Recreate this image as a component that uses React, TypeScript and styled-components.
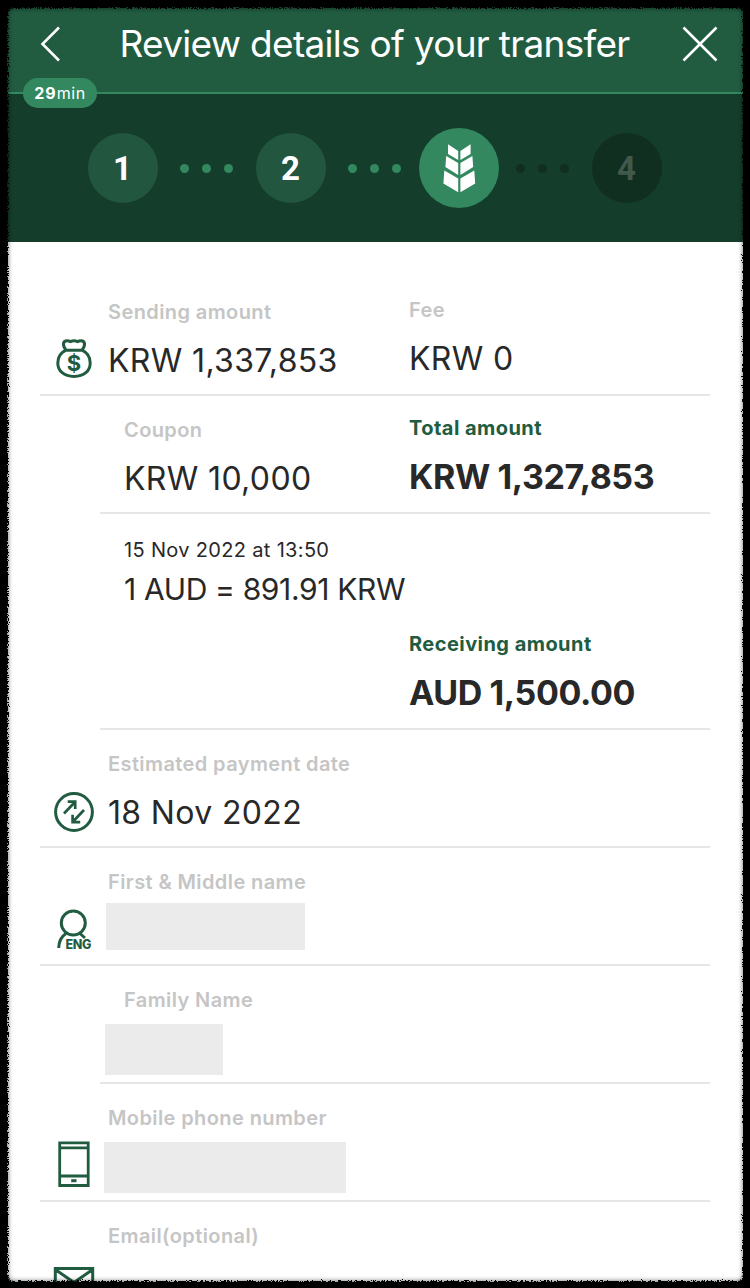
import React from "react";
import styled, { createGlobalStyle } from "styled-components";

const GlobalStyle = createGlobalStyle`
  * { box-sizing: border-box; }
  body { margin: 0; background: #000; font-family: Inter, "Liberation Sans", sans-serif; }
`;

const Screen = styled.div`
  position: relative;
  width: 750px;
  height: 1288px;
  padding: 7px 7px 6px 7px;
  overflow: hidden;
  background: #000;
`;

const Page = styled.main`
  height: 100%;
  overflow: hidden;
  background: #fff;
`;

const Header = styled.header`
  position: relative;
  display: flex;
  align-items: center;
  justify-content: space-between;
  height: 87px;
  padding: 2px 23px 13px 28px;
  background: #215c41;
  border-bottom: 2px solid #338860;
`;

const IconButton = styled.button`
  display: flex;
  padding: 0;
  border: 0;
  background: none;
`;

const Title = styled.h1`
  margin: 0 0 0 2px;
  color: #fff;
  font-size: 37px;
  font-weight: 400;
  line-height: 44px;
  letter-spacing: -0.7px;
  white-space: nowrap;
`;

const Timer = styled.span`
  position: absolute;
  left: 16px;
  top: 71px;
  width: 74px;
  height: 30px;
  border-radius: 15px;
  background: #338860;
  color: #fff;
  font-size: 16px;
  line-height: 30px;
  letter-spacing: 0.6px;
  text-align: center;
  white-space: nowrap;
  b { font-weight: 700; letter-spacing: 1px; }
`;

const Stepper = styled.nav`
  display: flex;
  align-items: center;
  justify-content: center;
  height: 148px;
  padding-right: 1px;
  background: #153d2b;
`;

const StepSlot = styled.div`
  display: flex;
  justify-content: center;
  width: 80px;
`;

type StepState = "done" | "current" | "next";
const stepFill = { done: "#22563f", current: "#338860", next: "#112f21" };

const StepCircle = styled.div<{ $state: StepState }>`
  display: flex;
  align-items: center;
  justify-content: center;
  width: ${(p) => (p.$state === "current" ? 80 : 70)}px;
  height: ${(p) => (p.$state === "current" ? 80 : 70)}px;
  border-radius: 50%;
  background: ${(p) => stepFill[p.$state]};
  color: ${(p) => (p.$state === "next" ? "#41594d" : "#fff")};
  font-family: Roboto, sans-serif;
  font-size: 33px;
  font-weight: 700;
`;

const Dots = styled.div`
  display: flex;
  justify-content: center;
  gap: 13px;
  width: 88px;
`;

const Dot = styled.i<{ $dim?: boolean }>`
  width: 9px;
  height: 9px;
  border-radius: 50%;
  background: ${(p) => (p.$dim ? "#112f21" : "#338860")};
`;

const Details = styled.section`
  padding: 36px 33px 0;
`;

const Row = styled.div<{ $indent?: boolean; $height?: number }>`
  display: flex;
  height: ${(p) => p.$height ?? 118}px;
  margin-left: ${(p) => (p.$indent ? 60 : 0)}px;
  padding-left: ${(p) => (p.$indent ? 24 : 0)}px;
  border-bottom: 2px solid #e6e6e6;
`;

const IconCell = styled.div`
  display: flex;
  flex: none;
  justify-content: center;
  width: 68px;
  padding-top: 58px;
  svg { display: block; overflow: visible; }
`;

const Field = styled.div<{ $width?: number; $raised?: boolean; $top?: number }>`
  display: flex;
  flex-direction: column;
  align-items: flex-start;
  gap: 17px;
  width: ${(p) => (p.$width ? `${p.$width}px` : "auto")};
  padding-top: ${(p) => p.$top ?? (p.$raised ? 20 : 22)}px;
  white-space: nowrap;
`;

const Label = styled.span<{ $strong?: boolean }>`
  color: ${(p) => (p.$strong ? "#215c41" : "#c5c5c5")};
  font-size: 20px;
  font-weight: ${(p) => (p.$strong ? 700 : 600)};
  line-height: 24px;
  letter-spacing: ${(p) => (p.$strong ? 0.45 : 0.4)}px;
`;

const Value = styled.span<{ $strong?: boolean }>`
  color: #282828;
  font-size: ${(p) => (p.$strong ? 34 : 32)}px;
  font-weight: ${(p) => (p.$strong ? 700 : 400)};
  line-height: 40px;
  letter-spacing: ${(p) => (p.$strong ? -0.4 : 0.35)}px;
`;

const Rate = styled(Field)`
  gap: 7px;
  width: 285px;
  padding-top: 24px;
`;

const RateTime = styled.span`
  color: #282828;
  font-size: 20px;
  line-height: 24px;
  letter-spacing: 0.33px;
`;

const RateValue = styled.span`
  color: #282828;
  font-size: 30px;
  line-height: 40px;
  letter-spacing: -0.35px;
`;

const Masked = styled.div<{ $w: number; $h: number; $shift: number; $up: number }>`
  width: ${(p) => p.$w}px;
  height: ${(p) => p.$h}px;
  margin: ${(p) => -p.$up}px 0 0 ${(p) => -p.$shift}px;
  background: #ebebeb;
`;

const Edge = styled.svg`
  position: absolute;
  inset: 0;
  pointer-events: none;
`;

const Icon = ({ children }: { children: React.ReactNode }) => (
  <svg width="48" height="48" viewBox="0 0 48 48" fill="none" stroke="#215c41" strokeWidth="3">
    {children}
  </svg>
);

const leaves =
  "M29 16.3 39.2 23V32L29 26ZM27.2 28 39.2 35V47L26.4 39ZM25.3 42.5 39.2 50.5V64.3L24.4 55.5Z";

const Wheat = () => (
  <svg width="80" height="80" viewBox="0 0 80 80" fill="#fff">
    <path d={leaves} />
    <path transform="translate(80.6 0) scale(-1 1)" d={leaves} />
  </svg>
);

const DotGroup = ({ dim }: { dim?: boolean }) => (
  <Dots>
    <Dot $dim={dim} />
    <Dot $dim={dim} />
    <Dot $dim={dim} />
  </Dots>
);

const ring = "M-20-20H770V1308H-20ZM14 8Q8 8 8 14V1275Q8 1281 14 1281H737Q743 1281 743 1275V14Q743 8 737 8Z";

export default function App() {
  return (
    <>
      <GlobalStyle />
      <Screen>
        <Page>
          <Header>
            <IconButton aria-label="Back">
              <svg width="32" height="40" viewBox="0 0 32 40" fill="none" stroke="#fff" strokeWidth="2.6">
                <path d="M24 3.5 7.5 20 24 36.5" />
              </svg>
            </IconButton>
            <Title>Review details of your transfer</Title>
            <IconButton aria-label="Close">
              <svg width="40" height="40" viewBox="0 0 40 40" fill="none" stroke="#fff" strokeWidth="2.6">
                <path d="M3.5 3.5 36.5 36.5M36.5 3.5 3.5 36.5" />
              </svg>
            </IconButton>
            <Timer><b>29</b>min</Timer>
          </Header>
          <Stepper>
            <StepSlot><StepCircle $state="done">1</StepCircle></StepSlot>
            <DotGroup />
            <StepSlot><StepCircle $state="done">2</StepCircle></StepSlot>
            <DotGroup />
            <StepSlot><StepCircle $state="current"><Wheat /></StepCircle></StepSlot>
            <DotGroup dim />
            <StepSlot><StepCircle $state="next">4</StepCircle></StepSlot>
          </Stepper>
          <Details>
            <Row>
              <IconCell>
                <Icon>
                  <path d="M16 14.2C10 17 7.8 22 7.8 27C7.8 35 14 40.4 24 40.4S40.2 35 40.2 27C40.2 22 38 17 32 14.2ZM16 14.2C12 9 13 4.7 17 4.7Q19 4.7 20.5 5.6Q24 4 27.5 5.6Q29 4.7 31 4.7C35 4.7 36 9 32 14.2" />
                  <text x="24" y="35" textAnchor="middle" fill="#215c41" stroke="none" fontSize="22" fontWeight="700">$</text>
                </Icon>
              </IconCell>
              <Field $width={301}><Label>Sending amount</Label><Value>KRW 1,337,853</Value></Field>
              <Field $raised><Label>Fee</Label><Value>KRW 0</Value></Field>
            </Row>
            <Row $indent>
              <Field $width={285}><Label>Coupon</Label><Value>KRW 10,000</Value></Field>
              <Field $raised><Label $strong>Total amount</Label><Value $strong>KRW 1,327,853</Value></Field>
            </Row>
            <Row $indent $height={216}>
              <Rate><RateTime>15 Nov 2022 at 13:50</RateTime><RateValue>1 AUD = 891.91 KRW</RateValue></Rate>
              <Field $top={118}><Label $strong>Receiving amount</Label><Value $strong>AUD 1,500.00</Value></Field>
            </Row>
            <Row>
              <IconCell>
                <Icon>
                  <circle cx="24" cy="24" r="18.4" />
                  <path d="M14 25.5 24.5 14.5M17.7 13.7H25.2V21M34 22 23.3 33.3M22.6 26.8V34.2H30.2" strokeWidth="2.7" />
                </Icon>
              </IconCell>
              <Field><Label>Estimated payment date</Label><Value>18 Nov 2022</Value></Field>
            </Row>
            <Row>
              <IconCell>
                <Icon>
                  <circle cx="23.3" cy="17" r="12" />
                  <path d="M8.7 42Q9 32 16 27.5M30 27.5 35 32" />
                  <text x="15.500" y="43" fill="#215c41" stroke="none" fontSize="12.500" fontWeight="800" textLength="26">ENG</text>
                </Icon>
              </IconCell>
              <Field><Label>First &amp; Middle name</Label><Masked $w={199} $h={47} $shift={2} $up={8} /></Field>
            </Row>
            <Row $indent>
              <Field><Label>Family Name</Label><Masked $w={118} $h={51} $shift={19} $up={5} /></Field>
            </Row>
            <Row>
              <IconCell>
                <Icon>
                  <path d="M9.7 0.8H38.2V43.5H9.7ZM9.7 5.8H38.2M9.7 34H38.2" strokeWidth="2.8" />
                  <path d="M21.2 38.7H26.5" />
                </Icon>
              </IconCell>
              <Field><Label>Mobile phone number</Label><Masked $w={242} $h={51} $shift={4} $up={5} /></Field>
            </Row>
            <Row>
              <IconCell>
                <Icon>
                  <path d="M5.3 8.5H42.7V36H5.3ZM5.3 9.5 24 22.5 42.7 9.5" />
                </Icon>
              </IconCell>
              <Field><Label>Email(optional)</Label></Field>
            </Row>
          </Details>
        </Page>
        <Edge width="750" height="1288" viewBox="0 0 750 1288" aria-hidden="true">
          <defs>
            <filter id="soft" filterUnits="userSpaceOnUse" x="-20" y="-20" width="790" height="1328">
              <feGaussianBlur stdDeviation="2.5" />
            </filter>
            <filter id="rough" filterUnits="userSpaceOnUse" x="-20" y="-20" width="790" height="1328">
              <feTurbulence type="fractalNoise" baseFrequency="0.8" numOctaves="2" seed="4" result="n" />
              <feDisplacementMap in="SourceGraphic" in2="n" scale="6" xChannelSelector="R" yChannelSelector="G" />
            </filter>
          </defs>
          <path d={ring} fillRule="evenodd" opacity="0.6" filter="url(#soft)" />
          <path d={ring} fillRule="evenodd" filter="url(#rough)" />
        </Edge>
      </Screen>
    </>
  );
}
